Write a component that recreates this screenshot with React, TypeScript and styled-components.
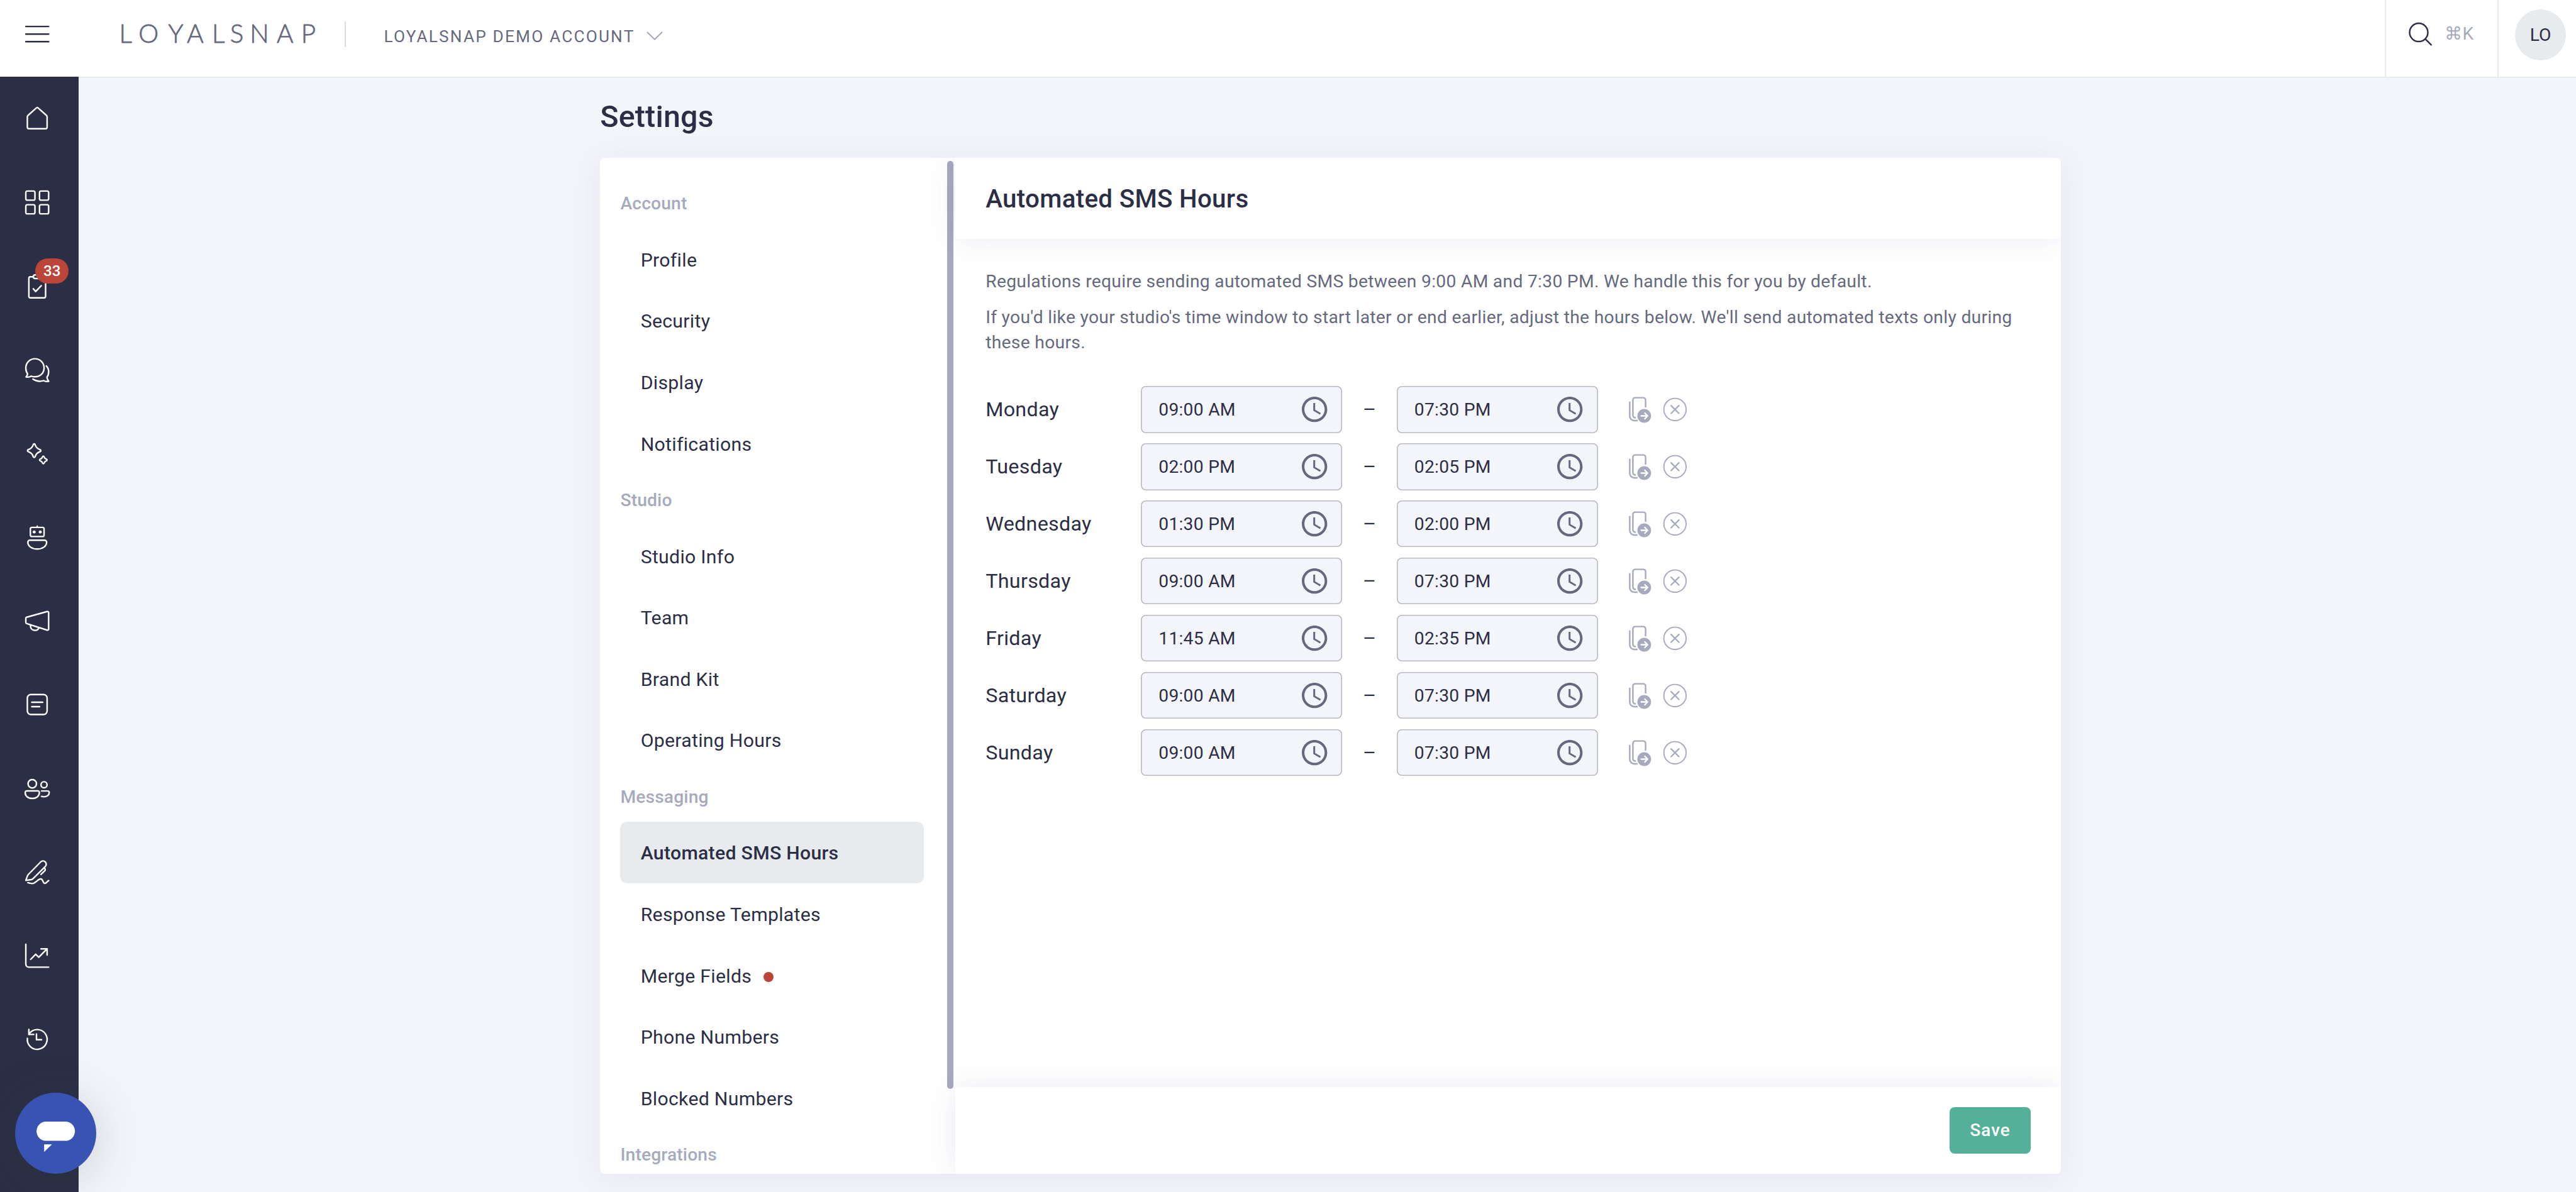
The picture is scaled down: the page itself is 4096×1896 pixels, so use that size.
import React from "react";
import styled, { createGlobalStyle, css } from "styled-components";

const color = {
  ink: "#2c2e45",
  slate: "#66697e",
  mist: "#a7aabd",
  line: "#e7ebee",
  page: "#f4f5fa",
  red: "#bb4538",
  green: "#55b09a",
  blue: "#3953b3",
};

/* 1rem is one hundred design pixels of the 5078px wide artboard. */
const GlobalStyle = createGlobalStyle`
  html { font-size: calc(100vw / 50.78); }
  *, *::before, *::after { box-sizing: border-box; }
  body {
    margin: 0;
    font-family: Roboto, "Liberation Sans", sans-serif;
    color: ${color.ink};
    background: ${color.page};
    letter-spacing: 0;
  }
  p, h1, h2, h3 { margin: 0; }
  button { font: inherit; border: 0; padding: 0; background: none; color: inherit; }
`;

const Page = styled.div`
  display: flex;
  flex-direction: column;
  width: 100vw;
  height: 100vh;
  overflow: hidden;
  position: relative;
`;

/* ---------- top bar ---------- */

const TopBar = styled.header`
  display: flex;
  align-items: stretch;
  flex: none;
  height: 1.51rem;
  background: #fff;
`;

const TopLeft = styled.div`
  display: flex;
  align-items: center;
  height: 1.35rem;
  padding-left: 0.43rem;
  flex: 1;
`;

const Glyph = styled.svg<{ $w: number; $h?: number }>`
  display: block;
  flex: none;
  width: ${(p) => p.$w / 100}rem;
  height: ${(p) => (p.$h ?? p.$w) / 100}rem;
  fill: none;
  stroke: currentColor;
  stroke-width: 3;
  stroke-linecap: round;
  stroke-linejoin: round;
  overflow: visible;
`;

const Wordmark = styled(Glyph)`
  margin-left: 1.27rem;
  text {
    font-family: Lato, sans-serif;
    font-weight: 300;
    font-size: 50px;
    fill: ${color.slate};
    stroke: ${color.slate};
    stroke-width: 1px;
  }
`;

const LogoRule = styled.span`
  width: 0.02rem;
  height: 0.5rem;
  margin-left: 0.5rem;
  background: #dcdcdf;
`;

const AccountSwitch = styled.button`
  display: flex;
  align-items: center;
  margin: 0.1rem 0 0 0.75rem;
  font-size: 0.325rem;
  line-height: 1;
  letter-spacing: 0.0272rem;
  color: ${color.slate};
  gap: 0.23rem;
  svg {
    margin-bottom: 0.04rem;
    color: ${color.mist};
  }
`;

const SearchBox = styled.div`
  display: flex;
  align-items: center;
  width: 2.22rem;
  padding: 0 0 0.18rem 0.415rem;
  border-left: 2px solid ${color.line};
  font-size: 0.35rem;
  color: ${color.mist};
  gap: 0.245rem;
  svg { color: ${color.ink}; }
`;

const AvatarBox = styled.div`
  display: flex;
  width: 1.55rem;
  padding: 0.19rem 0 0 0.325rem;
  border-left: 2px solid ${color.line};
`;

const Avatar = styled.div`
  display: grid;
  place-items: center;
  width: 1rem;
  height: 1rem;
  border-radius: 50%;
  background: #e8ebee;
  font-size: 0.35rem;
`;

/* ---------- side rail ---------- */

const Below = styled.div`
  display: flex;
  flex: 1;
  min-height: 0;
`;

const Rail = styled.nav`
  display: flex;
  flex-direction: column;
  flex: none;
  width: 1.55rem;
  background: ${color.ink};
  color: #fff;
`;

const RailItem = styled.a`
  position: relative;
  display: flex;
  align-items: center;
  height: 1.651rem;
  padding-left: 0.43rem;
  flex: none;
`;

const CountBadge = styled.span`
  position: absolute;
  left: 0.7rem;
  top: 0.28rem;
  display: grid;
  place-items: center;
  width: 0.65rem;
  height: 0.5rem;
  border-radius: 0.25rem;
  background: ${color.red};
  font-size: 0.3rem;
  font-weight: 500;
`;

/* ---------- content ---------- */

const Content = styled.main`
  flex: 1;
  min-width: 0;
  border-top: 2px solid ${color.line};
  background: ${color.page};
  padding-left: 10.28rem;
`;

const PageTitle = styled.h1`
  font-size: 0.6rem;
  font-weight: 500;
  line-height: 0.7rem;
  letter-spacing: 0.004em;
  padding-top: 0.43rem;
  height: 1.58rem;
`;

const Card = styled.section`
  display: flex;
  width: 28.8rem;
  height: 20.03rem;
  border-radius: 0.1rem;
  background: #fff;
  box-shadow: 0 0.08rem 0.6rem rgba(90, 90, 160, 0.1);
`;

const Menu = styled.div`
  display: flex;
  width: 7rem;
  flex: none;
  overflow: hidden;
  border-radius: 0.1rem 0 0 0.1rem;
`;

const MenuList = styled.div`
  flex: 1;
  padding: 0.385rem 0.46rem 0 0.4rem;
`;

const ScrollTrack = styled.div`
  flex: none;
  width: 0.16rem;
  padding-top: 0.06rem;
`;

const ScrollThumb = styled.div`
  width: 0.12rem;
  height: 18.3rem;
  border-radius: 0.06rem;
  background: ${color.mist};
`;

const GroupLabel = styled.h3`
  display: flex;
  align-items: center;
  height: 1.01rem;
  padding-top: 0.01rem;
  font-size: 0.35rem;
  font-weight: 500;
  letter-spacing: 0.005em;
  color: ${color.mist};
`;

const MenuItem = styled.a<{ $active?: boolean }>`
  display: flex;
  align-items: center;
  gap: 0.235rem;
  height: 1.21rem;
  padding: 0.02rem 0 0 0.4rem;
  border-radius: 0.14rem;
  font-size: 0.375rem;
  letter-spacing: 0.00938em;
  ${(p) => p.$active && css`
    background: #e8ebee;
    font-weight: 500;
  `}
`;

const NewDot = styled.i`
  width: 0.2rem;
  height: 0.2rem;
  margin-top: 0.05rem;
  border-radius: 50%;
  background: ${color.red};
`;

const Panel = styled.div`
  display: flex;
  flex-direction: column;
  flex: 1;
  overflow: hidden;
  margin-left: -0.6rem;
  padding-left: 0.6rem;
  border-radius: 0 0.1rem 0.1rem 0;
`;

const PanelHead = styled.header`
  display: flex;
  align-items: center;
  flex: none;
  height: 1.6rem;
  padding: 0.01rem 0 0 0.6rem;
  background: #fff;
  box-shadow: 0 0 0.6rem rgba(60, 60, 120, 0.1);
  h2 {
    font-size: 0.5rem;
    font-weight: 500;
    letter-spacing: 0.0075em;
  }
`;

const PanelBody = styled.div`
  flex: 1;
  padding: 0.595rem 0.6rem 0;
`;

const Note = styled.p`
  font-size: 0.35rem;
  line-height: 0.5005rem;
  letter-spacing: 0.01071em;
  color: ${color.slate};
  margin-bottom: 0.2rem;
`;

const PanelFoot = styled.footer`
  display: flex;
  align-items: center;
  justify-content: flex-end;
  flex: none;
  height: 1.71rem;
  padding: 0 0.6rem 0 0;
  background: #fff;
  box-shadow: 0 0 0.6rem rgba(60, 60, 120, 0.1);
`;

const SaveButton = styled.button`
  width: 1.6rem;
  height: 0.91rem;
  border-radius: 0.1rem;
  background: ${color.green};
  color: #fff;
  font-size: 0.35rem;
  font-weight: 500;
  letter-spacing: 0.02857em;
`;

/* ---------- hours ---------- */

const Hours = styled.div`
  display: flex;
  flex-direction: column;
  gap: 0.208rem;
  padding-top: 0.403rem;
`;

const HoursRow = styled.div`
  display: flex;
  align-items: center;
  height: 0.92rem;
  color: ${color.ink};
`;

const DayName = styled.span`
  width: 3.065rem;
  font-size: 0.4rem;
  letter-spacing: 0.00938em;
`;

const TimeField = styled.div`
  display: flex;
  align-items: center;
  justify-content: space-between;
  width: 3.965rem;
  height: 0.925rem;
  padding: 0 0.25rem 0 0.345rem;
  box-shadow: inset 0 0 0 0.02rem #b9bbc0;
  border-radius: 0.1rem;
  background: ${color.page};
  font-size: 0.35rem;
  letter-spacing: 0.00938em;
  svg {
    fill: ${color.slate};
    stroke: none;
  }
`;

const Dash = styled.span`
  width: 1.075rem;
  text-align: center;
  font-size: 0.4rem;
`;

const RowActions = styled.div`
  display: flex;
  align-items: center;
  gap: 0.2rem;
  margin-left: 0.6rem;
  color: ${color.mist};
`;

/* ---------- chat launcher ---------- */

const ChatLauncher = styled.button`
  position: absolute;
  left: 0.3rem;
  bottom: 0.36rem;
  width: 1.6rem;
  height: 1.6rem;
  border-radius: 50%;
  background: ${color.blue};
  box-shadow: 0 0.1rem 0.9rem rgba(40, 70, 60, 0.22);
  svg {
    fill: #fff;
    stroke: none;
  }
`;

const rail: React.ReactNode[] = [
  <path key="home" d="M13.5 50.5h33a3 3 0 0 0 3-3V27.2a4 4 0 0 0-1.4-3L31.6 9.4a2.5 2.5 0 0 0-3.2 0L11.9 24.2a4 4 0 0 0-1.4 3v20.3a3 3 0 0 0 3 3z" />,
  <g key="grid">
    <rect x="7.5" y="8.5" width="18" height="18" rx="3" />
    <rect x="34.5" y="8.5" width="18" height="18" rx="3" />
    <rect x="7.5" y="35.5" width="18" height="18" rx="3" />
    <rect x="34.5" y="35.5" width="18" height="18" rx="3" />
  </g>,
  <g key="tasks">
    <rect x="13.5" y="11.5" width="33" height="41.5" rx="3" />
    <rect x="22.5" y="7.8" width="15" height="7" rx="3" fill={color.ink} />
    <path d="M22.3 35.2 27 40.5 38 29" />
  </g>,
  <g key="chats">
    <path d="M8 44c1.6-1.4 2.6-3.4 3-5.8C8.6 35 7.5 30.9 7.5 26.5 7.5 16 15.3 8.2 25.5 8.2s18 7.8 18 18.1-7.8 17.4-18 17.4c-2.6 0-5-.4-7.3-1.2-3 1.9-6.6 2.4-10.2 1.5z" />
    <path d="M48 22.5c3 3 4.5 7 4.5 11.5 0 4.2-1.2 7.8-3.4 10.5.4 3.2 1.6 5.8 3.6 8.3-3.4.6-6.8.2-9.7-1.4-7.4 2.3-15.4 1.2-21.5-3" />
  </g>,
  <g key="ai">
    <path d="M22.3 12.4a1.8 1.8 0 0 1 3.4 0c1.7 5.8 4.3 8.4 10 10.2a2.1 2.1 0 0 1 0 4c-5.7 1.8-8.3 4.4-10 10.2a1.8 1.8 0 0 1-3.4 0c-1.7-5.8-4.3-8.4-10-10.2a2.1 2.1 0 0 1 0-4c5.7-1.8 8.3-4.4 10-10.2z" />
    <path d="M40.7 36.4a1.4 1.4 0 0 1 2.6 0c.9 2.7 2.1 4 4.9 4.9a1.7 1.7 0 0 1 0 3.2c-2.8.9-4 2.2-4.9 4.9a1.4 1.4 0 0 1-2.6 0c-.9-2.7-2.1-4-4.9-4.9a1.7 1.7 0 0 1 0-3.2c2.8-.9 4-2.2 4.9-4.9z" />
  </g>,
  <g key="bot">
    <rect x="16.5" y="11" width="27" height="18" rx="3" />
    <path d="M30 8.6v2.4" />
    <circle cx="24" cy="20" r="3" fill="currentColor" stroke="none" />
    <circle cx="36" cy="20" r="3" fill="currentColor" stroke="none" />
    <path d="M15.5 36.2h29a4 4 0 0 1 4 4c0 8.3-8.5 13.5-18.5 13.5s-18.5-5.2-18.5-13.5a4 4 0 0 1 4-4z" />
  </g>,
  <g key="campaigns">
    <path d="M9.2 23.2 49.4 12.1a2.4 2.4 0 0 1 3.1 2.3v32a2.4 2.4 0 0 1-3.1 2.3L9.2 35.8a2.4 2.4 0 0 1-1.7-2.3v-8a2.4 2.4 0 0 1 1.7-2.3z" />
    <path d="M16.7 38.5v2.4a8.8 8.8 0 0 0 16.8 3" />
  </g>,
  <g key="notes">
    <rect x="10.5" y="10.8" width="39" height="39.4" rx="7" />
    <path d="M19.3 26h21.4M19.3 34.7h15.4" />
  </g>,
  <g key="people">
    <circle cx="20.2" cy="20.6" r="8.3" />
    <circle cx="43.4" cy="22.6" r="6" />
    <path d="M9.4 34.7H31a3.2 3.2 0 0 1 3.2 3.2c0 7.3-6 11.8-14 11.8s-14-4.5-14-11.8a3.2 3.2 0 0 1 3.2-3.2z" />
    <path d="M38.5 34.9h12.2a3 3 0 0 1 3 3c0 5-4.5 8.4-10.3 8.4-1.7 0-3.4-.3-5-.8" />
  </g>,
  <g key="sign">
    <path d="M7.5 46.3 10.8 37.3a8 8 0 0 1 1.9-2.9L36.8 9.9a6.4 6.4 0 0 1 9 0 6.4 6.4 0 0 1 0 9.2L22 42.6a8 8 0 0 1-3.4 2z" />
    <path d="M43.5 21.4l1.3 1.3a3.3 3.3 0 0 1 0 4.8L37.4 34.6" />
    <path d="M11.5 50.8c2.8 1.1 5.6 1.7 8.4 1.7 7.5 0 11-9 17-9 5 0 3.5 8.6 8.3 8.6 3 0 4.3-4 7.4-5.4" />
  </g>,
  <g key="reports">
    <path d="M7.5 7.5v39a6 6 0 0 0 6 6h39" />
    <path d="M17 37.2 27 27l6 6 16-16" />
    <path d="M37.5 16.5h12v12" />
  </g>,
  <g key="history">
    <path d="M10.6 28a19.5 19.5 0 1 0 4-9.8L13.5 20" />
    <path d="M13.5 10.5v9.8h9.6M28.5 19.5v11.2h10" />
  </g>,
];

const groups: { label: string; items: string[] }[] = [
  { label: "Account", items: ["Profile", "Security", "Display", "Notifications"] },
  { label: "Studio", items: ["Studio Info", "Team", "Brand Kit", "Operating Hours"] },
  {
    label: "Messaging",
    items: ["Automated SMS Hours", "Response Templates", "Merge Fields", "Phone Numbers", "Blocked Numbers"],
  },
  { label: "Integrations", items: [] },
];

const week: [string, string, string][] = [
  ["Monday", "09:00 AM", "07:30 PM"],
  ["Tuesday", "02:00 PM", "02:05 PM"],
  ["Wednesday", "01:30 PM", "02:00 PM"],
  ["Thursday", "09:00 AM", "07:30 PM"],
  ["Friday", "11:45 AM", "02:35 PM"],
  ["Saturday", "09:00 AM", "07:30 PM"],
  ["Sunday", "09:00 AM", "07:30 PM"],
];

function Time({ value }: { value: string }) {
  return (
    <TimeField>
      {value}
      <Glyph $w={60} viewBox="0 0 24 24">
        <path d="M11.99 2C6.47 2 2 6.48 2 12s4.47 10 9.99 10C17.52 22 22 17.52 22 12S17.52 2 11.99 2zM12 20c-4.42 0-8-3.58-8-8s3.58-8 8-8 8 3.58 8 8-3.58 8-8 8zm.5-13H11v6l5.25 3.15.75-1.23-4.5-2.67z" />
      </Glyph>
    </TimeField>
  );
}

function CopyToIcon() {
  return (
    <Glyph $w={48} $h={54} viewBox="0 0 48 54">
      <path d="M34.2 23.5V9a4.5 4.5 0 0 0-4.5-4.5h-16A4.5 4.5 0 0 0 9.2 9v30.5a4.5 4.5 0 0 0 4.5 4.5H15" strokeLinecap="butt" />
      <path d="M3 12v28.8a8.7 8.7 0 0 0 8.7 8.7h6.8" strokeLinecap="butt" />
      <circle cx="31.5" cy="40.3" r="13.5" fill="currentColor" stroke="none" />
      <path d="M25.5 40.3h12.2M32.8 34.6l5.4 5.7-5.4 5.7" stroke="#fff" strokeWidth="2.8" />
    </Glyph>
  );
}

function ClearIcon() {
  return (
    <Glyph $w={48} viewBox="0 0 48 48">
      <circle cx="24" cy="24" r="22" strokeWidth="2.4" />
      <path d="m16.3 16.3 15.4 15.4M31.7 16.3 16.3 31.7" strokeWidth="2.8" />
    </Glyph>
  );
}

export default function App() {
  return (
    <>
      <GlobalStyle />
      <Page>
        <TopBar>
          <TopLeft>
            <Glyph $w={60} viewBox="0 0 60 60" color={color.ink}>
              <path d="M7.5 15h45M7.5 30h45M7.5 45h45" />
            </Glyph>
            <Wordmark $w={400} $h={50} viewBox="230 42 400 50">
              <text x="234.3 272.6 331 368 417.3 453 492 545 593" y="84.5">LOYALSNAP</text>
            </Wordmark>
            <LogoRule />
            <AccountSwitch>
              LOYALSNAP DEMO ACCOUNT
              <Glyph $w={32} $h={18} viewBox="0 0 32 18">
                <path d="m1.8 1.8 14.2 14 14.2-14" strokeWidth="2.6" />
              </Glyph>
            </AccountSwitch>
          </TopLeft>
          <SearchBox>
            <Glyph $w={50} viewBox="0 0 50 50">
              <circle cx="23.5" cy="23" r="18" />
              <path d="m36.5 36 11.5 11.5" />
            </Glyph>
            <span>⌘K</span>
          </SearchBox>
          <AvatarBox>
            <Avatar>LO</Avatar>
          </AvatarBox>
        </TopBar>

        <Below>
          <Rail>
            {rail.map((icon, i) => (
              <RailItem key={i}>
                <Glyph $w={60} viewBox="0 0 60 60">{icon}</Glyph>
                {i === 2 && <CountBadge>33</CountBadge>}
              </RailItem>
            ))}
          </Rail>

          <Content>
            <PageTitle>Settings</PageTitle>
            <Card>
              <Menu>
                <MenuList>
                  {groups.map((g) => (
                    <React.Fragment key={g.label}>
                      <GroupLabel>{g.label}</GroupLabel>
                      {g.items.map((item) => (
                        <MenuItem key={item} $active={item === "Automated SMS Hours"}>
                          {item}
                          {item === "Merge Fields" && <NewDot />}
                        </MenuItem>
                      ))}
                    </React.Fragment>
                  ))}
                </MenuList>
                <ScrollTrack>
                  <ScrollThumb />
                </ScrollTrack>
              </Menu>

              <Panel>
                <PanelHead>
                  <h2>Automated SMS Hours</h2>
                </PanelHead>
                <PanelBody>
                  <Note>
                    Regulations require sending automated SMS between 9:00 AM and 7:30 PM. We handle this for you by
                    default.
                  </Note>
                  <Note>
                    If you'd like your studio's time window to start later or end earlier, adjust the hours below. We'll
                    send automated texts only during these hours.
                  </Note>
                  <Hours>
                    {week.map(([day, from, to]) => (
                      <HoursRow key={day}>
                        <DayName>{day}</DayName>
                        <Time value={from} />
                        <Dash>–</Dash>
                        <Time value={to} />
                        <RowActions>
                          <CopyToIcon />
                          <ClearIcon />
                        </RowActions>
                      </HoursRow>
                    ))}
                  </Hours>
                </PanelBody>
                <PanelFoot>
                  <SaveButton>Save</SaveButton>
                </PanelFoot>
              </Panel>
            </Card>
          </Content>
        </Below>

        <ChatLauncher>
          <Glyph $w={160} viewBox="0 0 160 160">
            <rect x="42.3" y="57" width="75.7" height="38" rx="19" />
            <path d="M57.3 102h15.4l-15.4 15z" />
          </Glyph>
        </ChatLauncher>
      </Page>
    </>
  );
}
